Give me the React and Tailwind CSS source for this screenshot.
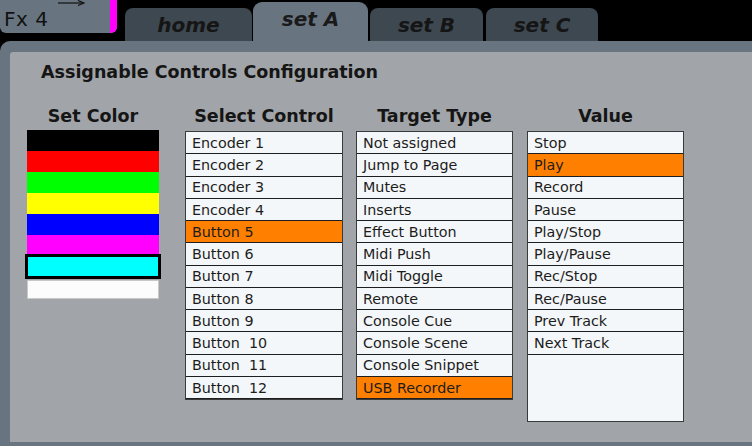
import React from "react";

const font = { fontFamily: '"DejaVu Sans", Verdana, sans-serif' };

const selectControl = ["Encoder 1", "Encoder 2", "Encoder 3", "Encoder 4", "Button 5", "Button 6", "Button 7", "Button 8", "Button 9", "Button  10", "Button  11", "Button  12"];
const targetType = ["Not assigned", "Jump to Page", "Mutes", "Inserts", "Effect Button", "Midi Push", "Midi Toggle", "Remote", "Console Cue", "Console Scene", "Console Snippet", "USB Recorder"];
const values = ["Stop", "Play", "Record", "Pause", "Play/Stop", "Play/Pause", "Rec/Stop", "Rec/Pause", "Prev Track", "Next Track"];

function List({ items, selected, height }) {
  return (
    <div className={`flex flex-col border border-[#3a3a3a] bg-[#f4f7f9] ${height}`}>
      {items.map((t, i) => (
        <div
          key={i}
          className={`h-[22.25px] shrink-0 border-b border-[#1e1e1e] pl-[6px] pt-[1px] flex items-center text-[14.3px] leading-none whitespace-pre text-[#1c1c1c] ${i === selected ? "bg-[#ff8000]" : "bg-[#f4f7f9]"}`}
        >
          {t}
        </div>
      ))}
    </div>
  );
}

function Header({ children }) {
  return <div className="h-[21px] mb-[4px] text-center text-[17.5px] leading-[21px] font-bold text-[#151515]">{children}</div>;
}

function Tab({ label, active }) {
  if (active) {
    return (
      <div className="h-[39px] w-[115px] rounded-t-[9px] bg-[#687580] flex justify-center pt-[2px] text-[20px] font-bold italic text-[#1a1a1a]">
        {label}
      </div>
    );
  }
  return (
    <div className="h-[33px] rounded-t-[8px] bg-[#3d4850] flex justify-center pt-[2px] text-[20px] font-bold italic text-[#151515]">
      {label}
    </div>
  );
}

export default function App() {
  return (
    <div className="w-[752px] h-[446px] bg-black flex flex-col overflow-hidden" style={font}>
      {/* top bar */}
      <div className="h-[41px] flex items-start shrink-0">
        <div className="w-[117px] h-[33px] bg-[#687580] rounded-b-[6px] flex overflow-hidden shrink-0">
          <div className="flex-1 flex flex-col">
            <div className="h-[7px] pl-[58px]">
              <svg width="27" height="7" viewBox="0 0 27 7" className="block">
                <line x1="0" y1="3" x2="25" y2="3" stroke="#111" strokeWidth="1.2" />
                <path d="M20 0.5 L26 3 L20 5.5" fill="none" stroke="#111" strokeWidth="1.2" />
              </svg>
            </div>
            <div className="pl-[4px] text-[20px] leading-[24px] text-[#111] tracking-[0.5px]">Fx 4</div>
          </div>
          <div className="w-[7px] bg-[#ff00ff] rounded-br-[5px]" />
        </div>
        <div className="self-end flex items-end ml-[8px]">
          <div className="w-[127px]"><Tab label="home" /></div>
          <div className="ml-[1px]"><Tab label="set A" active /></div>
          <div className="w-[113px] ml-[2px]"><Tab label="set B" /></div>
          <div className="w-[112px] ml-[3px]"><Tab label="set C" /></div>
        </div>
      </div>
      {/* panel */}
      <div className="flex-1 bg-[#687580] rounded-tl-[10px] pl-[10px] pt-[11px] pb-[4px] flex">
        <div className="flex-1 bg-[#a1a4a8] rounded-tl-[3px] flex flex-col">
          <div className="pl-[31px] pt-[10px] text-[17.5px] leading-[21px] font-bold text-[#151515]">
            Assignable Controls Configuration
          </div>
          <div className="flex mt-[23px] pl-[17px]">
            <div className="w-[132px] flex flex-col">
              <Header>Set Color</Header>
              <div className="flex flex-col -mt-[1px]">
                <div className="h-[21px] bg-black" />
                <div className="h-[21px] bg-[#ff0000]" />
                <div className="h-[21px] bg-[#00ff00]" />
                <div className="h-[21px] bg-[#ffff00]" />
                <div className="h-[21px] bg-[#0000ff]" />
                <div className="h-[19px] bg-[#ff00ff]" />
                <div className="h-[25px] -mx-[2px] border-[3px] border-black bg-[#00ffff]" />
                <div className="h-[19px] mt-[1px] bg-[#fcfcfc] border border-[#c8c8c8]" />
              </div>
            </div>
            <div className="w-[158px] ml-[26px] flex flex-col">
              <Header>Select Control</Header>
              <List items={selectControl} selected={4} height="h-[269px]" />
            </div>
            <div className="w-[157px] ml-[13px] flex flex-col">
              <Header>Target Type</Header>
              <List items={targetType} selected={11} height="h-[269px]" />
            </div>
            <div className="w-[157px] ml-[14px] flex flex-col">
              <Header>Value</Header>
              <List items={values} selected={1} height="h-[291px]" />
            </div>
          </div>
        </div>
      </div>
    </div>
  );
}
